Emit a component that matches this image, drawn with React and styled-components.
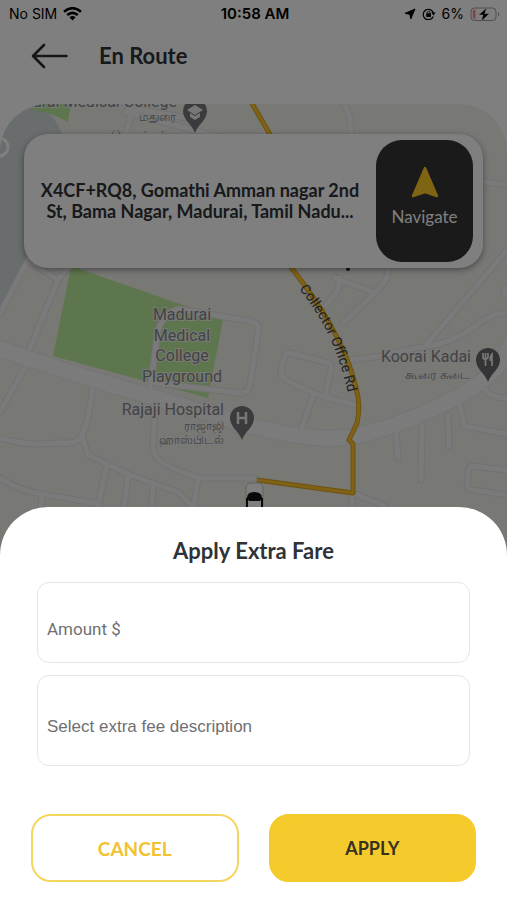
import React from "react";
import styled, { createGlobalStyle, css } from "styled-components";

const GlobalStyle = createGlobalStyle`
  *, *::before, *::after { box-sizing: border-box; }
  body { margin: 0; background: #fff; }
  button, input { font: inherit; }
`;

const heading = css`
  font-family: Lato, "Open Sans", sans-serif;
  font-weight: 700;
  color: #2f3237;
`;

const Page = styled.div`
  display: grid;
  min-height: 100vh;
  font-family: Inter, Roboto, sans-serif;
`;

const Screen = styled.div`
  grid-area: 1 / 1;
  display: flex;
  flex-direction: column;
  background: #fff;
`;

const Backdrop = styled.div`
  grid-area: 1 / 1;
  z-index: 1;
  background: rgba(0, 0, 0, 0.5);
`;

const StatusBar = styled.div`
  display: grid;
  grid-template-columns: 1fr auto 1fr;
  align-items: center;
  height: 28px;
  padding: 0 6px 0 9px;
  font-size: 14px;
  line-height: 20px;
  color: #000;
`;

const StatusGroup = styled.div`
  display: flex;
  align-items: center;
  justify-content: ${(p) => (p.$end ? "flex-end" : "flex-start")};
  gap: 6px;
`;

const Clock = styled.time`
  font-size: 15px;
  font-weight: 600;
`;

const Header = styled.header`
  display: flex;
  align-items: center;
  gap: 30px;
  height: 76px;
  padding: 0 30px 20px;
`;

const BackButton = styled.button`
  display: flex;
  padding: 0;
  border: 0;
  background: none;
  color: #2a2c31;
`;

const Title = styled.h1`
  ${heading}
  margin: 0;
  font-size: 22px;
  line-height: 28px;
`;

const MapArea = styled.main`
  position: relative;
  flex: 1;
  padding: 30px 24px;
  border-radius: 48px 48px 0 0;
  overflow: hidden;
  background: #f1f0eb;
`;

const MapDrawing = styled.svg`
  position: absolute;
  inset: 0;
  width: 100%;
  height: 100%;
`;

const AddressCard = styled.section`
  position: relative;
  display: flex;
  align-items: center;
  gap: 12px;
  padding: 6px 10px 6px 12px;
  border-radius: 24px;
  background: #fff;
  box-shadow: 0 2px 6px rgba(0, 0, 0, 0.4);
`;

const Address = styled.p`
  ${heading}
  flex: 1;
  margin: 0;
  font-size: 18px;
  line-height: 21px;
  text-align: center;
`;

const NavigateButton = styled.button`
  display: flex;
  flex-direction: column;
  align-items: center;
  justify-content: center;
  gap: 6px;
  width: 97px;
  height: 122px;
  padding: 0 0 8px;
  border: 0;
  border-radius: 26px;
  background: #343434;
  color: #fff;
  font-family: Lato, sans-serif;
  font-size: 17px;
  line-height: 24px;
`;

const Sheet = styled.form`
  grid-area: 1 / 1;
  align-self: end;
  z-index: 2;
  display: flex;
  flex-direction: column;
  padding: 30px 31px 18px;
  border-radius: 48px 48px 0 0;
  background: #fff;
`;

const SheetTitle = styled.h2`
  ${heading}
  margin: 0 0 17px;
  font-size: 22px;
  line-height: 28px;
  text-align: center;
`;

const Fields = styled.div`
  display: flex;
  flex-direction: column;
  gap: 12px;
  margin: 0 6px 48px;
`;

const Field = styled.input`
  width: 100%;
  height: ${(p) => (p.$tall ? 91 : 81)}px;
  padding: 12px 9px 0;
  border: 1px solid #e6e6e6;
  border-radius: 12px;
  background: #fff;
  color: #333;
  font-family: ${(p) => (p.$tall ? '"Liberation Sans", Arial' : "Roboto, Inter")}, sans-serif;
  font-size: 17px;

  &::placeholder { color: #6f6f72; opacity: 1; }
`;

const Actions = styled.div`
  display: grid;
  grid-template-columns: 1fr 1fr;
  gap: 30px;
`;

const ActionButton = styled.button`
  ${heading}
  height: 68px;
  border: 2px solid ${(p) => (p.$primary ? "#f5ca2c" : "#f2d660")};
  border-radius: 20px;
  background: ${(p) => (p.$primary ? "#f5ca2c" : "#fff")};
  color: ${(p) => (p.$primary ? "#35321f" : "#f2c230")};
  font-size: ${(p) => (p.$primary ? 18 : 19)}px;
`;

const MapLabel = styled.text`
  font-family: Roboto, "Noto Sans", sans-serif;
  font-size: ${(p) => p.$size || 16}px;
  fill: ${(p) => p.$fill || "#84868b"};
  text-anchor: ${(p) => p.$anchor || "end"};
  paint-order: stroke;
  stroke: ${(p) => (p.$bare ? "none" : "#f4f4f0")};
  stroke-width: 2px;
`;

const minorRoads = [
  "M28 260 L0 314 M28 260 L58 280 L72 262 M58 280 L30 348 M28 362 L0 412",
  "M92 390 Q90 415 82 436 Q76 445 60 443 L40 444 Q20 444 0 438",
  "M82 436 L88 455 L130 475 L178 492 L192 506 M106 468 L98 506 M128 476 L124 506 M153 485 L152 506",
  "M0 478 Q20 491 42 494 L100 504 M42 494 L40 520",
  "M155 395 L153 450 Q156 462 175 469 L198 478 L254 478 M198 478 L194 506",
  "M150 390 L158 330 Q165 311 180 309 L254 322 Q260 324 258 334 L250 384 Q248 394 240 393 L156 383",
  "M335 278 L375 293 L386 280 L390 265 M375 293 L343 323 M340 278 L338 290 L326 306",
  "M507 250 L426 345 M350 360 L382 356 Q390 352 430 346 Q455 342 482 321 Q495 313 507 313",
  "M290 353 Q284 351 281 372 Q280 376 290 382 Q305 390 319 395 L354 405 M290 353 L325 362 Q334 362 330 374 L325 396 M313 396 L302 427",
  "M396 432 L398 458 M422 425 L421 480 M448 415 L449 446 M460 405 L464 426 L507 434",
  "M484 388 Q490 398 507 398 M507 470 L473 466 Q468 466 468 475 L467 485 Q468 491 480 491 L507 495",
  "M344 104 Q352 115 351 140 M484 182 L507 185",
  "M353 493 L385 506 M352 493 L352 506 M507 286 Q500 290 507 296",
  "M135 104 L125 135 M128 108 L200 120 M125 112 L270 150",
];
const mainRoad = "M-5 347 Q60 370 115 386 T245 424 T365 434 T457 397 T512 340";
const route =
  "M250 100 L272 138 L292 270 M290 266 L303 283 Q345 340 356 388 Q361 405 357 423 L349 440 L353 444 L353 493 L257 480";

const pinPath = "M0 0 C-4 -10 -12 -13 -12 -22 A12 12 0 1 1 12 -22 C12 -13 4 -10 0 0Z";

function CityMap() {
  return (
    <MapDrawing viewBox="0 104 507 796" preserveAspectRatio="xMidYMin slice" role="img" aria-label="Map">
      <path d="M0 104 H38 Q66 125 64 150 L40 230 L0 316Z" fill="#d2dadc" />
      <path d="M27 104 H71 L68 122 Q50 112 30 109Z" fill="#bdec9c" />
      <path d="M71 266 L223 319 L208 398 L53 356Z" fill="#bdec9c" />
      <circle cx="-1" cy="147" r="9" fill="none" stroke="#fff" strokeWidth="3" />
      <g fill="none" strokeLinejoin="round" strokeLinecap="round">
        {minorRoads.map((d) => <path key={d} d={d} stroke="#e2e2e3" strokeWidth="7" />)}
        <path d={mainRoad} stroke="#e8e8e9" strokeWidth="17" />
        {minorRoads.map((d) => <path key={d} d={d} stroke="#f5f5f5" strokeWidth="5" />)}
        <path d={mainRoad} stroke="#f7f7f7" strokeWidth="15" />
        <path d={route} stroke="#d9a31f" strokeWidth="5" strokeLinecap="butt" />
        <path d={route} stroke="#ffc42b" strokeWidth="3" strokeLinecap="butt" />
      </g>

      <MapLabel x="177" y="107">Rural Medical College</MapLabel>
      <MapLabel $size={12} x="176" y="121">மதுரை</MapLabel>
      <MapLabel $size={13} x="168" y="140">மெடிக்கல்</MapLabel>
      <g transform="translate(195 133)">
        <path d={pinPath} fill="#76777b" />
        <path d="M-8 -23 L0 -28 L8 -23 L0 -18Z M-5 -20 L0 -17 L5 -20 V-16 L0 -13 L-5 -16Z" fill="#f1f0eb" />
      </g>

      <MapLabel $anchor="middle" x="182" y="320">Madurai</MapLabel>
      <MapLabel $anchor="middle" x="182" y="341">Medical</MapLabel>
      <MapLabel $anchor="middle" x="182" y="361">College</MapLabel>
      <MapLabel $anchor="middle" x="182" y="382">Playground</MapLabel>

      <MapLabel x="224" y="415">Rajaji Hospital</MapLabel>
      <MapLabel $size={12} x="224" y="430">ராஜாஜி</MapLabel>
      <MapLabel $size={12} x="224" y="444">ஹாஸ்பிடல்</MapLabel>
      <g transform="translate(242 440)">
        <path d={pinPath} fill="#76777b" />
        <path d="M-4 -28 V-16 M4 -28 V-16 M-4 -22 H4" stroke="#f1f0eb" strokeWidth="2.5" />
      </g>

      <MapLabel x="471" y="362">Koorai Kadai</MapLabel>
      <MapLabel $size={13} x="470" y="379">கூரை கடை</MapLabel>
      <g transform="translate(488 382)">
        <path d={pinPath} fill="#68696d" />
        <path
          d="M-5 -29 V-25 Q-5 -23 -3 -23 Q0 -23 0 -25 V-29 M-2.5 -29 V-16 M4 -16 V-28 Q2 -26 2 -22 H4"
          fill="none" stroke="#f1f0eb" strokeWidth="1.7"
        />
      </g>

      <path id="collector-road" d="M299 289 Q338 335 351 408" fill="none" />
      <MapLabel $bare $size={14} $fill="#3d4249" $anchor="start">
        <textPath href="#collector-road">Collector Office Rd</textPath>
      </MapLabel>
      <circle cx="348" cy="269" r="2" fill="#222" />

      <g>
        <rect x="246" y="483" width="17" height="36" rx="5" fill="#fff" stroke="#c4c4c4" />
        <path d="M247 498 Q247 492 254 492 Q262 492 262 498 L260 501 H249Z" fill="#101010" />
        <path d="M247 498 V518 M262 498 V518" stroke="#111" strokeWidth="2" />
      </g>
    </MapDrawing>
  );
}

const WifiIcon = () => (
  <svg width="19" height="14" viewBox="0 0 19 14" fill="none" stroke="#000" strokeWidth="2.6" aria-hidden="true">
    <path d="M1 4.8 Q9.5 -2.4 18 4.8 M4.2 8 Q9.5 3.6 14.8 8" />
    <path d="M9.5 13.5 L6.4 10.3 Q9.5 7.8 12.6 10.3Z" fill="#000" stroke="none" />
  </svg>
);

const LocationIcon = () => (
  <svg width="12" height="12" viewBox="0 0 12 12" aria-hidden="true">
    <path d="M11 1 L6.8 10.8 L5.8 6.2 L1 5.4Z" stroke="#000" strokeLinejoin="round" />
  </svg>
);

const LockIcon = () => (
  <svg width="14" height="12" viewBox="0 0 14 12" fill="none" stroke="#000" aria-hidden="true">
    <path d="M11.2 8.5 A5.2 5.2 0 1 1 11.4 5" strokeWidth="1.2" />
    <path d="M9.3 4.5 H13.6 L11.5 7.4Z" fill="#000" stroke="none" />
    <rect x="4.2" y="5.3" width="4.8" height="3.6" rx="0.6" fill="#000" stroke="none" />
    <path d="M5.2 5.5 V4.2 Q6.6 2 8 4.2 V5.5" strokeWidth="0.9" />
  </svg>
);

const BatteryIcon = () => (
  <svg width="31" height="15" viewBox="0 0 31 15" aria-hidden="true">
    <rect x="1" y="1" width="25" height="12.5" rx="3.5" fill="none" stroke="#a89a9a" />
    <path d="M4.5 2.8 H5.5 V11.8 H4.5 Q2.8 11.8 2.8 10 V4.6 Q2.8 2.8 4.5 2.8Z" fill="#ff8a86" />
    <path d="M28 5 Q30.5 7.2 28 9.5Z" fill="#a89a9a" />
    <path d="M17 0.5 L8.5 8 H13 L11 14.5 L19.5 6.6 H14.8Z" stroke="#fff" strokeWidth="0.6" />
  </svg>
);

export default function App() {
  return (
    <Page>
      <GlobalStyle />
      <Screen>
        <StatusBar>
          <StatusGroup>
            <span>No SIM</span>
            <WifiIcon />
          </StatusGroup>
          <Clock>10:58 AM</Clock>
          <StatusGroup $end>
            <LocationIcon />
            <LockIcon />
            <span>6%</span>
            <BatteryIcon />
          </StatusGroup>
        </StatusBar>
        <Header>
          <BackButton type="button" aria-label="Back">
            <svg width="39" height="26" viewBox="0 0 39 26" fill="none" stroke="currentColor" strokeWidth="2.6" strokeLinecap="round" strokeLinejoin="round">
              <path d="M14 2 L3 13 L14 24 M3 13 H36.5" />
            </svg>
          </BackButton>
          <Title>En Route</Title>
        </Header>
        <MapArea>
          <CityMap />
          <AddressCard>
            <Address>X4CF+RQ8, Gomathi Amman nagar 2nd St, Bama Nagar, Madurai, Tamil Nadu...</Address>
            <NavigateButton type="button">
              <svg width="28" height="33" viewBox="0 0 28 33" aria-hidden="true">
                <path d="M14 2 L26 30 L14 26 L2 30Z" fill="#ffc928" stroke="#ffc928" strokeWidth="2.4" strokeLinejoin="round" />
              </svg>
              Navigate
            </NavigateButton>
          </AddressCard>
        </MapArea>
      </Screen>
      <Backdrop />
      <Sheet onSubmit={(e) => e.preventDefault()}>
        <SheetTitle>Apply Extra Fare</SheetTitle>
        <Fields>
          <Field aria-label="Amount $" placeholder="Amount $" inputMode="decimal" />
          <Field $tall aria-label="Select extra fee description" placeholder="Select extra fee description" />
        </Fields>
        <Actions>
          <ActionButton type="button">CANCEL</ActionButton>
          <ActionButton $primary type="submit">APPLY</ActionButton>
        </Actions>
      </Sheet>
    </Page>
  );
}
